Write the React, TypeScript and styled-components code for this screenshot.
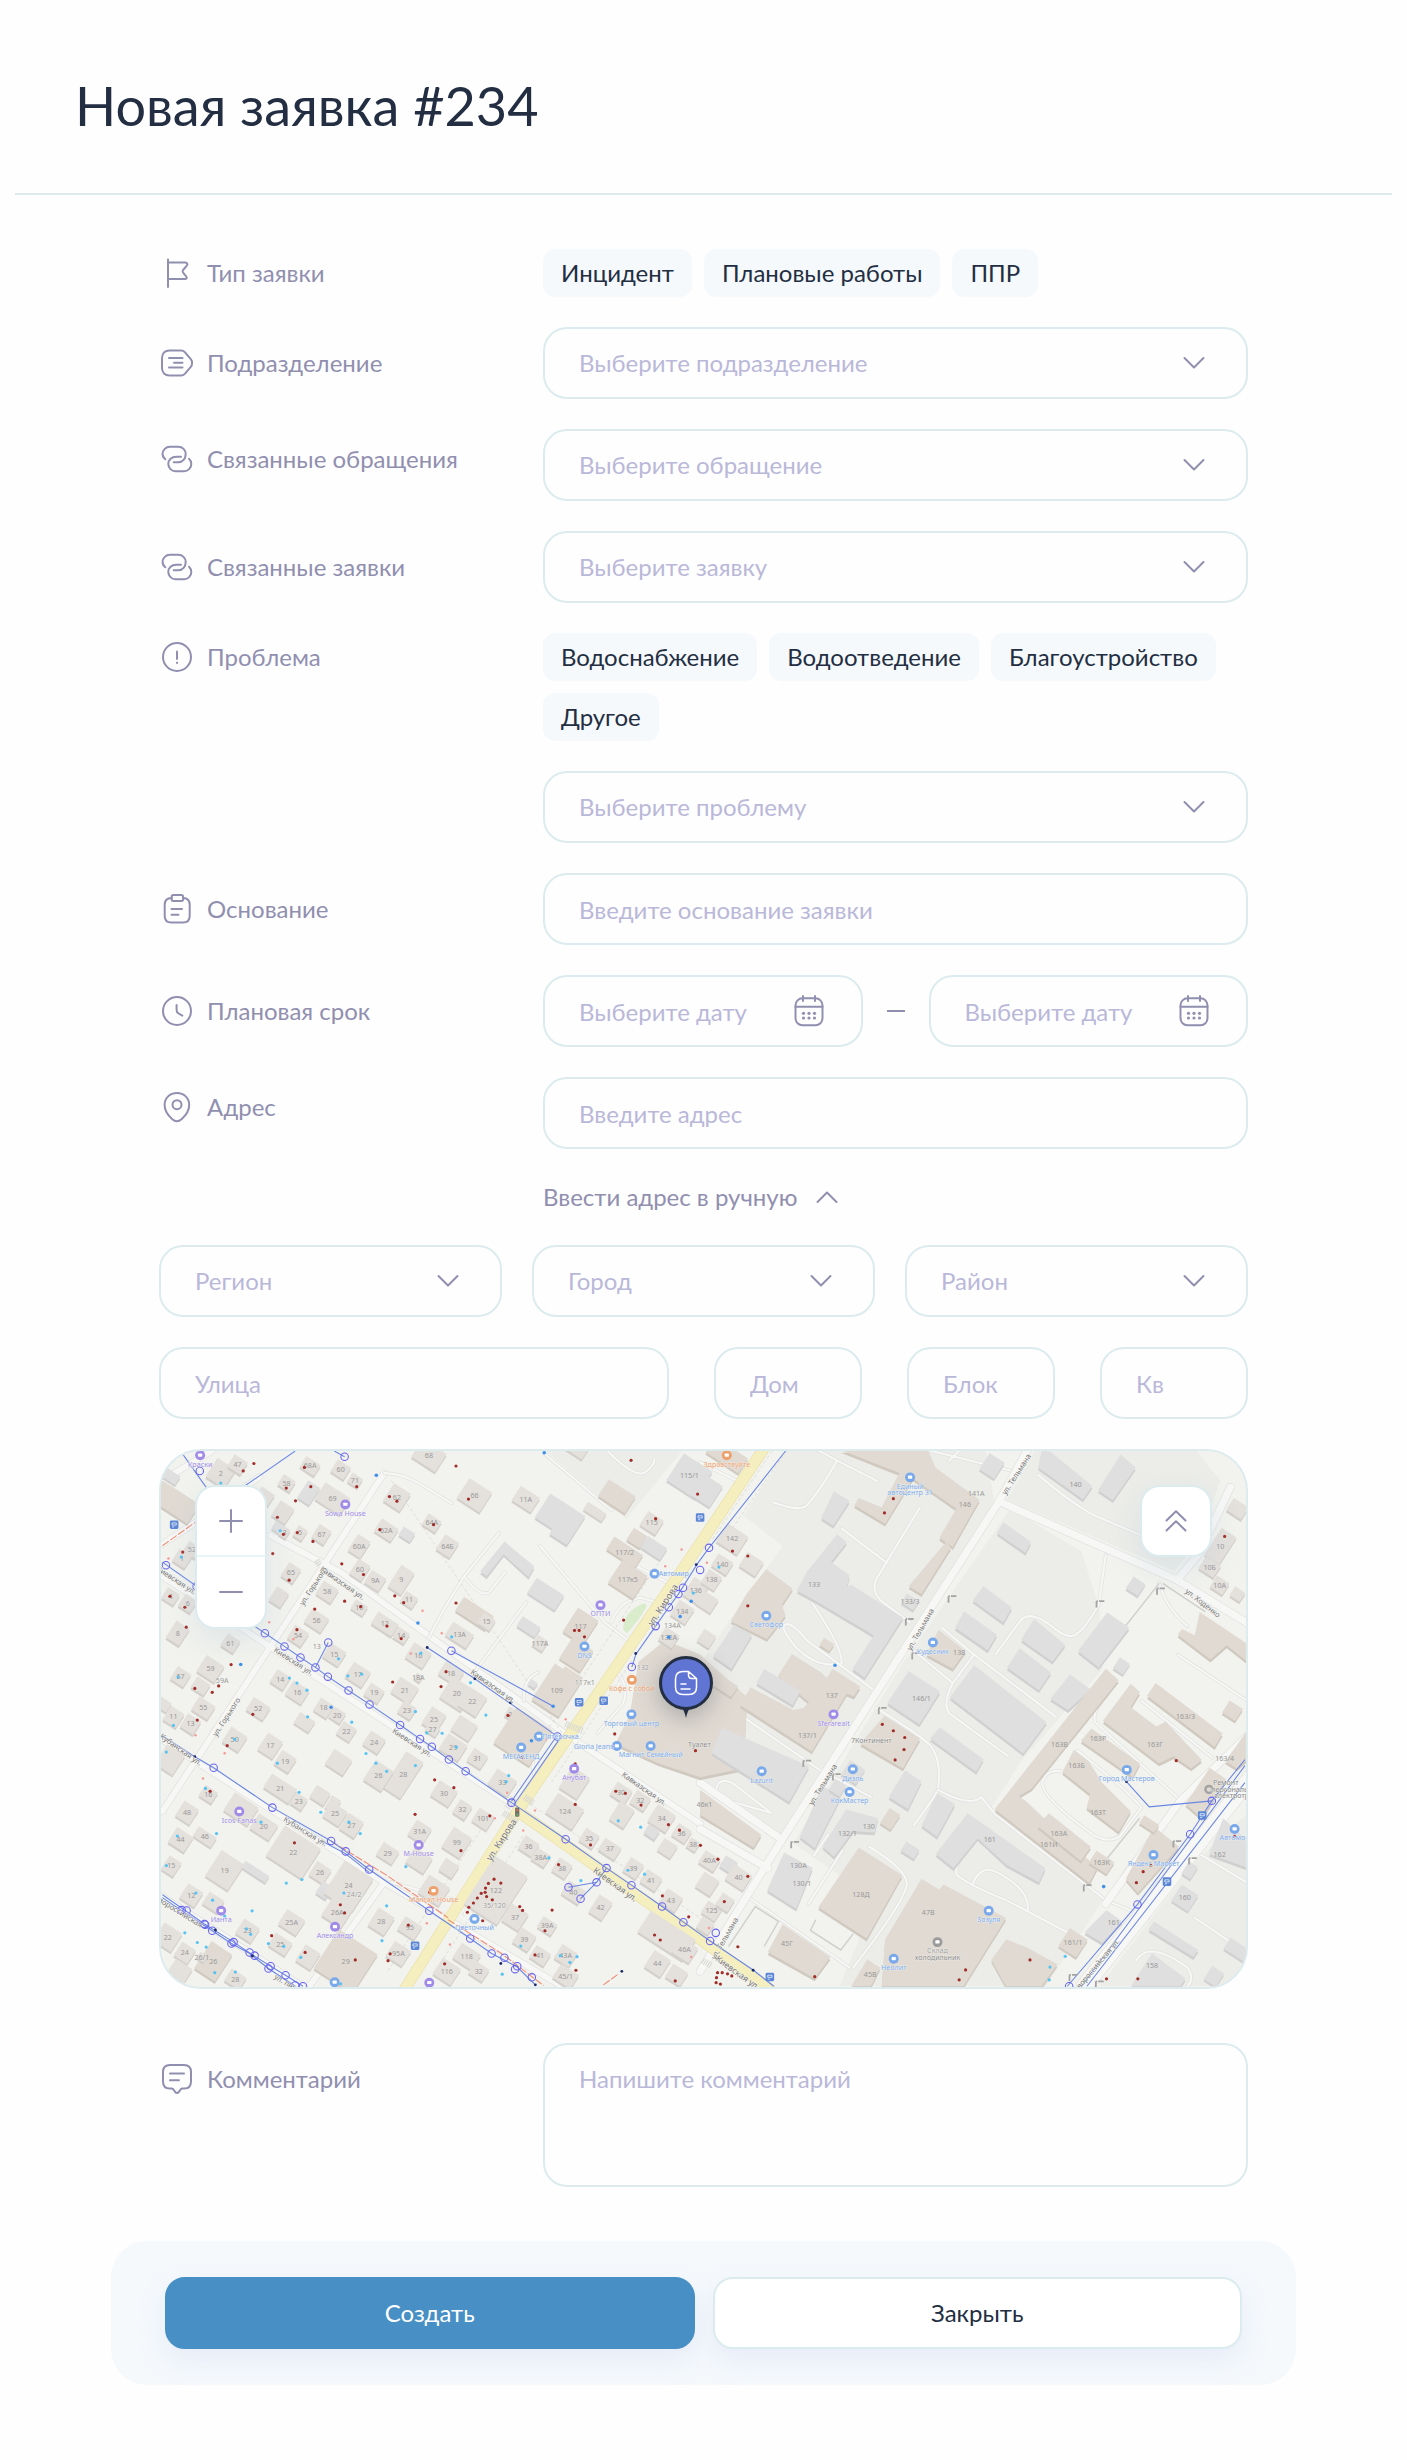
import React, { useId, useState } from "react";
import styled, { createGlobalStyle } from "styled-components";

const color = {
  page: "#fefefe",
  ink: "#232e42",
  muted: "#918fb0",
  placeholder: "#bab8d9",
  line: "#dcebee",
  soft: "#f5f9fc",
  primary: "#478fc5",
  pin: "#6074d4",
};

const GlobalStyle = createGlobalStyle`
  *, *::before, *::after { box-sizing: border-box; }
  body { margin: 0; background: ${color.page}; }
  body, button, input, select, textarea {
    font-family: Lato, Carlito, "Open Sans", sans-serif;
    font-size: 24px;
    line-height: 36px;
    color: ${color.ink};
  }
`;

/* ---------- page ---------- */

const Page = styled.main`
  padding: 0 15px 75px;
`;

const Header = styled.header`
  padding: 72px 60px 54px;
  border-bottom: 2px solid ${color.line};
`;

const Title = styled.h1`
  margin: 0;
  font-size: 54px;
  line-height: 67px;
  font-weight: 400;
`;

const Form = styled.form`
  display: flex;
  flex-direction: column;
  padding: 54px 96px 0;
`;

const Fields = styled.div`
  display: flex;
  flex-direction: column;
  gap: 30px;
  padding: 0 48px;
`;

const Row = styled.div<{ $spaced?: boolean }>`
  display: grid;
  grid-template-columns: 384px minmax(0, 1fr);
  align-items: start;
  margin-top: ${(p) => (p.$spaced ? 24 : 0)}px;
`;

const RowLabel = styled.label<{ $height: number }>`
  display: flex;
  align-items: center;
  gap: 12px;
  height: ${(p) => p.$height}px;
  color: ${color.muted};
`;

const RowBody = styled.div`
  grid-column: 2;
  display: flex;
  flex-direction: column;
  gap: 30px;
`;

const ChipList = styled.div`
  display: flex;
  flex-wrap: wrap;
  gap: 12px;
`;

const Chip = styled.button`
  height: 48px;
  padding: 0 18px;
  border: 0;
  border-radius: 12px;
  background: ${color.soft};
  cursor: pointer;
`;

const Control = styled.div`
  position: relative;
  min-width: 0;
`;

const ControlIcon = styled.span`
  position: absolute;
  top: 18px;
  right: 36px;
  height: 36px;
  color: ${color.muted};
  pointer-events: none;
`;

const boxed = `
  display: block;
  width: 100%;
  height: 72px;
  border: 2px solid ${color.line};
  border-radius: 24px;
  background: transparent;
  outline: none;
`;

const Input = styled.input<{ $icon?: boolean }>`
  ${boxed}
  padding: 0 ${(p) => (p.$icon ? 76 : 34)}px 0 34px;
  &::placeholder { color: ${color.placeholder}; opacity: 1; }
`;

const Select = styled.select`
  ${boxed}
  appearance: none;
  padding: 0 76px 0 34px;
  color: ${color.placeholder};
`;

const TextArea = styled.textarea`
  ${boxed}
  height: 144px;
  padding: 16px 34px;
  resize: none;
  &::placeholder { color: ${color.placeholder}; opacity: 1; }
`;

const DateRange = styled.div`
  display: grid;
  grid-template-columns: minmax(0, 1fr) 18px minmax(0, 1fr);
  gap: 24px;
  align-items: center;
`;

const Dash = styled.span`
  height: 2px;
  background: ${color.muted};
`;

const Toggle = styled.button`
  display: flex;
  align-items: center;
  align-self: flex-start;
  gap: 12px;
  height: 36px;
  padding: 0;
  border: 0;
  background: none;
  color: ${color.muted};
  cursor: pointer;
`;

const Thirds = styled.div`
  display: grid;
  grid-template-columns: repeat(3, minmax(0, 1fr));
  gap: 30px;
`;

const StreetLine = styled.div`
  display: grid;
  grid-template-columns: minmax(0, 1fr) repeat(3, 148px);
  gap: 45px;
`;

const Footer = styled.footer`
  display: grid;
  grid-template-columns: 1fr 1fr;
  gap: 18px;
  margin-top: 54px;
  padding: 36px 54px;
  border-radius: 36px;
  background: ${color.soft};
`;

const Action = styled.button<{ $primary?: boolean }>`
  height: 72px;
  border: 2px solid ${(p) => (p.$primary ? color.primary : color.line)};
  border-radius: 20px;
  background: ${(p) => (p.$primary ? color.primary : "#fff")};
  color: ${(p) => (p.$primary ? "#fff" : color.ink)};
  box-shadow: 0 12px 24px rgba(190, 200, 240, 0.25);
  cursor: pointer;
`;

/* ---------- map chrome ---------- */

const MapFrame = styled.section`
  position: relative;
  height: 540px;
  border: 2px solid ${color.line};
  border-radius: 42px;
  overflow: hidden;
  background: #f2f3ee;
`;

const MapDrawing = styled.svg`
  display: block;
  width: 100%;
  height: 100%;
  font-family: "Noto Sans", sans-serif;
`;

const MapPanel = styled.div<{ $side: "left" | "right" }>`
  position: absolute;
  top: 34px;
  ${(p) => p.$side}: 34px;
  display: flex;
  flex-direction: column;
  width: 72px;
  border: 2px solid ${color.line};
  border-radius: 20px;
  background: #fff;
  box-shadow: 0 12px 30px rgba(180, 200, 215, 0.3);
  overflow: hidden;
`;

const MapButton = styled.button`
  display: grid;
  place-items: center;
  height: 68px;
  padding: 0;
  border: 0;
  background: none;
  color: ${color.muted};
  cursor: pointer;
  & + & { height: 72px; border-top: 2px solid #e8f6fa; }
`;

const MapPin = styled.svg`
  position: absolute;
  left: 50%;
  top: 50%;
  width: 56px;
  height: 72px;
  margin: -63px 0 0 -46px;
  filter: drop-shadow(0 6px 12px rgba(35, 46, 66, 0.3));
`;

/* ---------- icons ---------- */

const Svg36 = ({ children }: { children: React.ReactNode }) => (
  <svg width="36" height="36" viewBox="0 0 36 36" fill="none" stroke="currentColor" strokeWidth="2" strokeLinecap="round" strokeLinejoin="round" aria-hidden="true">
    {children}
  </svg>
);

const icons = {
  flag: <path d="M9 4.500V32M9 7.500H26.300c2 0 2.700 1.700 1.500 3.200l-3.700 4.300c-.9 1-.9 1.700 0 2.700l3 3.700c1.200 1.600.7 2.600-1.300 2.600H9" />,
  unit: <path d="M10.500 5.500h11.600c1.500 0 2.800.6 3.700 1.600l6 7c1.700 2 1.700 5.800 0 7.800l-6 7c-.9 1-2.200 1.600-3.700 1.600H10.500c-4.600 0-7.500-3-7.500-7.500V13c0-4.500 2.900-7.500 7.500-7.500ZM10 13h13.500M15 17.800h8.500M10 22.500h13.500" />,
  link: <path d="M6.300 18.300C4.600 17 3.600 15.100 3.600 13a7.300 7.300 0 0 1 7.300-7.300h8.500a7.300 7.300 0 0 1 7.300 7.300c0 4.600-3 8.300-7.500 8.300h-4.500M22 15.700h-4.700c-4.700 0-8 3.300-8 7.300a7.300 7.300 0 0 0 7.300 7.300h8.400a7.300 7.300 0 0 0 7.300-7.300c0-2-.8-4-2.300-5.300" />,
  alert: <><circle cx="18" cy="18" r="14" /><path d="M18 12.500v7.500" /><circle cx="18" cy="23.700" r="1" fill="currentColor" stroke="none" /><path d="M18 23.700v.1" /></>,
  clipboard: <><path d="M12.500 7c-4.300 0-6.800 2.500-6.800 7v11c0 4.300 2.500 6.600 6.800 6.600h11.500c4.300 0 6.700-2.300 6.700-6.600V14c0-4.500-2.400-7-6.700-7" /><rect x="12.700" y="4" width="11.300" height="6" rx="1.500" /><path d="M12.500 18h10.500M12.500 23.700h7" /></>,
  clock: <><circle cx="18" cy="18" r="14" /><path d="M17.600 12v5c0 1.800.6 2.700 2 3.500l3.700 2.100" /></>,
  place: <><path d="M18 4C10.800 4 5.600 9 5.600 16c0 5.500 3.700 10.700 7.700 14.300 2.800 2.400 6.400 2.400 9.200 0C26.500 26.700 30.200 21.500 30.200 16c0-7-5.200-12-12.200-12Z" /><circle cx="18" cy="15.700" r="4.500" /></>,
  comment: <path d="M11 4h14c4.500 0 7 2.500 7 7v9.500c0 4.500-2.500 7-6.800 7h-1.700c-.8 0-1.400.4-1.900 1l-1.700 2.400c-1.100 1.500-2.700 1.500-3.800 0l-1.700-2.400c-.5-.6-1.100-1-1.900-1H10.800C6.500 27.500 4 25 4 20.500V11c0-4.500 2.500-7 7-7ZM11 12.500h14M11 19.300h9" />,
  down: <path d="M8.500 13l9.500 9.500 9.500-9.500" />,
  up: <path d="M8.500 23l9.500-9.500 9.500 9.500" />,
  calendar: <><rect x="4.500" y="5.300" width="27" height="27" rx="7" /><path d="M4.500 13.700h27M12 3v5M24 3v5" />{[20.300, 25].map((y) => [12.500, 18, 23.500].map((x) => <circle key={`${x}-${y}`} cx={x} cy={y} r="1.600" fill="currentColor" stroke="none" />))}</>,
  plus: <path d="M18 7v22M7 18h22" />,
  minus: <path d="M7 18h22" />,
  collapse: <path d="M8.500 17.500l9.500-9.300 9.500 9.300M8.500 27.500l9.500-9.300 9.500 9.300" />,
};

const Icon = ({ name }: { name: keyof typeof icons }) => <Svg36>{icons[name]}</Svg36>;

/* ---------- form parts ---------- */

const SelectBox = ({ id, text }: { id?: string; text: string }) => (
  <Control>
    <Select id={id} aria-label={id ? undefined : text} defaultValue="">
      <option value="">{text}</option>
    </Select>
    <ControlIcon><Icon name="down" /></ControlIcon>
  </Control>
);

const DateBox = ({ id, label }: { id?: string; label?: string }) => (
  <Control>
    <Input id={id} aria-label={label} $icon placeholder="Выберите дату" />
    <ControlIcon><Icon name="calendar" /></ControlIcon>
  </Control>
);

const Chips = ({ items, label, id }: { items: string[]; label: string; id: string }) => {
  const [active, setActive] = useState("");
  return (
    <ChipList role="group" aria-label={label} id={id}>
      {items.map((item) => (
        <Chip key={item} type="button" aria-pressed={active === item} onClick={() => setActive(item)}>{item}</Chip>
      ))}
    </ChipList>
  );
};

type FieldRowProps = {
  icon: keyof typeof icons;
  label: string;
  height?: number;
  spaced?: boolean;
  group?: boolean;
  children: (id: string) => React.ReactNode;
};

const FieldRow = ({ icon, label, height = 72, spaced, group, children }: FieldRowProps) => {
  const id = useId();
  return (
    <Row $spaced={spaced}>
      <RowLabel as={group ? "span" : "label"} htmlFor={group ? undefined : id} $height={height}>
        <Icon name={icon} />
        {label}
      </RowLabel>
      <RowBody>{children(id)}</RowBody>
    </Row>
  );
};

/* ---------- map data ----------
   Units are map units; the right half (everything east of Kirova) is kept
   in its own coordinates and shifted by EAST. */

const EAST = 1568;
type House = [number, number, number, number, string?, string?];

const tone: Record<string, [string, string]> = {
  r: ["#e4e0dc", "#d3cfcb"],
  g: ["#dfdfdf", "#d0d0d0"],
  b: ["#e0dad2", "#d0c9c0"],
};

const westHouses: House[] = [
  [221, 90, 62, 62, "2"], [268, 66, 44, 40, "47"], [90, 170, 130, 64, "", "b"], [75, 95, 60, 28, "", "g"],
  [472, 70, 48, 36, "68А"], [558, 80, 44, 40, "60"], [598, 110, 34, 30, "71"], [406, 118, 40, 34, "58"],
  [468, 145, 40, 58, "", "g"], [345, 155, 44, 36], [535, 162, 84, 56, "69"], [716, 158, 56, 58, "62"], [806, 40, 80, 60, "68"],
  [934, 152, 76, 66, "66"], [1078, 163, 64, 48, "11А"], [1152, 198, 64, 80, "", "g"], [1195, 236, 58, 96, "", "g"],
  [1272, 198, 62, 26], [1334, 155, 90, 56, "", "b"], [1538, 98, 96, 90, "115/1", "g"], [1220, 20, 60, 36],
  [395, 200, 46, 50], [382, 242, 30, 26, "", "g"], [400, 256, 24, 28, "3"], [444, 258, 30, 34, "5"], [504, 262, 40, 44, "67"],
  [610, 295, 42, 54, "60А"], [686, 250, 56, 42, "62А"], [744, 262, 38, 28, "", "g"], [814, 230, 44, 36, "64А"], [858, 295, 46, 50, "64Б"],
  [1432, 230, 52, 46, "115"], [1390, 272, 44, 40, "", "b"], [1438, 300, 66, 38, "", "g"], [1356, 312, 96, 42, "117/2", "b"],
  [1365, 388, 84, 76, "117к5", "b"], [612, 362, 40, 50, "60"], [655, 392, 48, 42, "9А"], [728, 390, 44, 72, "9"], [750, 446, 40, 34, "11"],
  [418, 370, 40, 46, "65"], [140, 305, 40, 34, "52"], [112, 330, 42, 40, "1"], [384, 438, 40, 46], [80, 436, 40, 36, "4"], [128, 456, 40, 40, "6"],
  [520, 424, 50, 44, "58"], [610, 468, 40, 30, "10"], [490, 504, 56, 46, "56"], [682, 514, 68, 40, "12"], [728, 546, 38, 34, "14"],
  [934, 484, 100, 46, "", "b"], [968, 508, 40, 34, "15"], [892, 545, 70, 44, "13А"], [1134, 430, 92, 50, "", "g"], [1086, 522, 60, 32, "", "g"],
  [1232, 520, 68, 80, "117", "b"], [1220, 600, 70, 70, "", "b"], [1200, 670, 60, 50, "", "b"], [1118, 568, 34, 34, "117А"],
  [100, 540, 44, 56, "8"], [248, 568, 42, 40, "61"], [438, 547, 46, 44, "54"], [540, 600, 52, 46, "15"], [108, 662, 44, 42, "57"], [192, 640, 60, 54, "59"],
  [164, 688, 44, 36, ""], [388, 670, 44, 42, "14"], [436, 706, 54, 46, "16"], [606, 656, 56, 50, "17"], [652, 708, 46, 40, "19"],
  [776, 602, 58, 50, "16"], [868, 652, 60, 44, "18"], [776, 664, 20, 20, "18А"], [738, 700, 62, 52, "21"], [884, 710, 72, 70, "20"], [928, 732, 60, 62, "22"],
  [1098, 682, 22, 18, "", "g"], [1165, 700, 90, 120, "109", "b"], [1040, 768, 36, 30, "24"], [1070, 830, 120, 120, "", "b"],
  [60, 740, 36, 30], [88, 775, 44, 46, "11"], [172, 750, 54, 44, "55"], [136, 795, 44, 44, "13"], [326, 752, 56, 42, "52"],
  [510, 750, 44, 42, "18"], [548, 770, 38, 34, "20"], [456, 790, 50, 36], [744, 756, 42, 38, "23"], [820, 782, 48, 56, "25"], [905, 806, 60, 50],
  [260, 838, 54, 50, "50"], [360, 856, 50, 56, "17"], [402, 900, 48, 46, "19"], [574, 816, 44, 42, "22"], [652, 846, 50, 46, "24"], [816, 810, 36, 28, "27"],
  [874, 860, 64, 52, "29"], [942, 892, 46, 42, "31"], [552, 902, 60, 50], [734, 938, 58, 120, "28"], [664, 940, 60, 66, "26"], [1012, 960, 66, 52, "33"],
  [78, 895, 60, 66], [388, 976, 84, 46, "21"], [186, 992, 42, 36, "16"], [440, 1012, 38, 36, "23"], [500, 995, 46, 40], [536, 1020, 30, 40], [848, 990, 60, 50, "30"],
  [126, 1044, 48, 50, "48"], [278, 1034, 80, 60], [342, 1084, 64, 50, "20"], [542, 1048, 54, 48, "25"], [588, 1080, 50, 52, "27"], [900, 1035, 40, 44, "32"], [958, 1062, 50, 44, "101"],
  [108, 1120, 54, 50, "44"], [176, 1112, 60, 32, "46"], [425, 1155, 120, 100, "22"], [780, 1098, 50, 50, "31А"], [884, 1128, 60, 66, "99"], [690, 1158, 52, 42, "29"], [778, 1178, 60, 50],
  [82, 1194, 40, 46, "15"], [232, 1206, 76, 86, "19"], [318, 1210, 80, 22, "", "g"], [500, 1212, 48, 46, "26"], [512, 1262, 34, 40, "", "g"], [580, 1250, 96, 110, "24"], [862, 1200, 44, 40],
  [138, 1276, 50, 48, "12"], [200, 1296, 50, 40], [548, 1324, 66, 62, "26А"], [672, 1350, 54, 58, "28"], [820, 1262, 70, 60], [994, 1262, 110, 160, "122"],
  [72, 1394, 60, 60, "22"], [296, 1376, 52, 48, "23"], [420, 1352, 60, 50, "25А"], [388, 1414, 56, 42, "25"], [752, 1368, 56, 44, "95"], [1048, 1338, 56, 56, "37"],
  [120, 1438, 46, 46, "24"], [200, 1462, 70, 90, "26", "b"], [168, 1450, 24, 20, "26/1"], [572, 1462, 130, 130, "29", "b"], [466, 1450, 50, 54], [720, 1440, 54, 50, "95А"], [856, 1490, 60, 54, "116"],
  [262, 1512, 50, 40, "28"], [105, 1490, 56, 50], [912, 1448, 64, 50, "118"], [946, 1490, 46, 40, "32"], [1074, 1400, 50, 50, "39"], [1138, 1362, 46, 36, "39А"], [1118, 1446, 48, 40, "41"],
  [1086, 1138, 46, 42, "36"], [1120, 1170, 44, 38, "38А"], [1180, 1200, 44, 44, "38"], [1188, 1040, 88, 66, "124"], [1215, 960, 60, 70], [1346, 988, 50, 42, "30"], [1400, 1010, 46, 42, "32"], [1348, 1050, 48, 60],
  [1460, 1060, 60, 56, "34"], [1432, 1098, 36, 30, "", "g"], [1516, 1102, 44, 40, "36"], [1256, 1116, 44, 42, "35"], [1314, 1146, 54, 40, "37"], [1476, 1144, 44, 40], [1548, 1134, 30, 30, "38"],
  [1212, 1268, 56, 44, "40"], [1288, 1310, 44, 58, "42"], [1380, 1200, 44, 46, "39"], [1430, 1234, 50, 42, "41"], [1486, 1290, 52, 46, "43"], [1474, 1390, 150, 70], [1524, 1430, 60, 50, "46А"],
  [1190, 1446, 50, 46, "43А"], [1190, 1504, 60, 46, "45/1"], [1448, 1468, 54, 56, "44"], [1502, 1500, 50, 44], [1518, 480, 50, 50, "134"], [1480, 552, 46, 42, "132А"], [1556, 420, 50, 60, "136"],
];

const westBlocks: [string, string][] = [
  ["b", "1395,620 1470,560 1568,600 1700,720 1690,920 1568,945 1450,905 1330,850 1370,770"],
  ["g", "1018,282 1102,352 1086,382 1016,318 968,380 950,366"],
];

const eastBlocks: [string, string][] = [
  ["b", "395,25 640,25 662,75 785,165 710,298 672,272 720,190 598,105 520,232 433,180 446,160 510,186 560,90"],
  ["b", "692,282 704,300 622,430 586,408"],
  ["g", "385,262 412,285 368,340 420,378 412,410 424,404 570,496 462,665 428,640 488,546 330,452 272,420 300,368"],
  ["b", "186,360 260,414 230,460 240,490 188,556 86,506 130,430"],
  ["g", "95,516 146,545 88,640 36,604"],
  ["b", "258,598 340,650 356,666 372,640 450,690 432,718 412,710 314,872 112,742 142,692 262,756 290,750 306,734 218,660"],
  ["g", "180,640 282,702 260,742 158,680"],
  ["g", "62,806 306,914 250,1014 32,876"],
  ["b", "0,980 172,1106 150,1142 0,1050"],
  ["g", "586,646 674,704 616,796 526,736"],
  ["g", "770,630 974,790 908,878 702,720"],
  ["b", "518,772 618,836 570,920 450,850"],
  ["b", "670,530 746,590 710,640 636,600"],
  ["g", "674,804 796,894 776,930 646,836"],
  ["g", "376,142 420,168 374,238 340,216"],
  ["g", "852,228 930,284 914,314 834,258"],
  ["g", "796,408 876,468 852,510 766,448"],
  ["g", "742,478 834,544 808,588 716,524"],
  ["g", "938,500 1026,572 990,620 902,558"],
  ["g", "898,582 986,650 952,700 862,636"],
  ["g", "1040,656 1098,698 1034,756 984,724"],
  ["g", "1144,482 1206,524 1120,636 1062,590"],
  ["g", "960,25 985,30 1102,126 1076,164 950,74"],
  ["g", "1182,38 1224,74 1160,166 1118,138"],
  ["b", "1404,480 1568,590 1540,622 1480,574 1434,614 1342,544 1354,528 1390,546"],
  ["b", "1140,640 1176,672 932,976 896,998 916,1012 1116,1200 1094,1242 828,1034"],
  ["b", "1210,682 1236,706 1210,748 1282,802 1308,788 1410,896 1380,920 1330,886 1290,906 1132,786"],
  ["b", "1280,680 1468,822 1446,860 1256,716"],
  ["b", "1100,808 1236,906 1216,944 1070,842"],
  ["b", "1050,868 1092,900 1130,960 1210,1040 1176,1098 1086,1030 1096,992 1018,930"],
  ["b", "980,1046 1098,1140 1070,1180 948,1082"],
  ["g", "752,1046 970,1200 952,1240 860,1190 780,1116 712,1200 662,1160"],
  ["g", "576,926 622,956 584,1034 530,1000"],
  ["g", "666,990 716,1020 666,1112 622,1080"],
  ["b", "446,1142 568,1220 468,1398 332,1310"],
  ["b", "622,1230 672,1260 684,1246 860,1340 740,1532 510,1532 520,1400"],
  ["g", "410,1035 500,1060 490,1100 430,1096 376,1168 344,1140"],
  ["g", "344,968 396,1000 322,1144 280,1112"],
  ["g", "236,1156 316,1200 270,1314 188,1262"],
  ["b", "232,1358 366,1450 322,1510 190,1436"],
  ["b", "860,1400 920,1424 1004,1470 960,1532 860,1532 818,1458"],
  ["b", "470,1456 506,1480 480,1532 424,1532"],
  ["g", "1270,1440 1364,1510 1350,1532 1210,1532"],
  ["g", "1470,1060 1568,1150 1568,1210 1430,1160"],
  ["b", "1432,918 1478,950 1410,1060 1364,1020"],
  ["b", "1276,1084 1346,1140 1230,1270 1196,1230"],
  ["b", "1568,770 1568,870 1508,920 1476,900"],
  ["g", "1142,1318 1186,1350 1130,1410 1080,1380"],
  ["g", "1276,1350 1400,1430 1386,1450 1260,1372"],
];

const eastHouses: House[] = [
  [90, 275, 70, 60, "142"], [62, 346, 50, 40, "140"], [32, 390, 44, 44, "138"], [144, 346, 54, 46], [20, 452, 48, 44], [18, 555, 40, 40],
  [72, 688, 60, 36, "", "b"], [356, 572, 34, 24, "", "b"], [590, 452, 40, 30, "133/3", "g"], [820, 70, 50, 54, "", "g"], [1224, 408, 40, 40, "", "g"],
  [1184, 632, 34, 36, "", "g"], [430, 930, 50, 48, "", "g"], [386, 974, 36, 36, "", "g"], [534, 1062, 36, 50, "", "b"], [590, 1150, 44, 30, "", "g"],
  [1462, 295, 50, 90, "10"], [1432, 354, 50, 40, "10Б"], [1460, 405, 42, 38, "10А"], [1510, 430, 34, 30], [1510, 190, 50, 40],
  [1496, 758, 44, 40, "", "b"], [1362, 1284, 56, 54, "160", "g"], [1376, 1206, 30, 40, "", "g"], [1048, 1410, 60, 60, "161/1", "b"], [1128, 1184, 60, 40, "163К", "b"],
  [1262, 1076, 50, 26, "", "b"], [1444, 1504, 40, 44, "", "g"], [1510, 1430, 70, 36, "", "g"], [26, 1180, 50, 40, "40А"], [80, 1190, 40, 36, "", "g"], [108, 1226, 60, 50, "40"], [20, 1244, 50, 50],
  [32, 1320, 46, 40, "125"], [70, 1296, 40, 40], [20, 140, 60, 70, "", "g"], [14, 1362, 40, 36], [75, 40, 110, 50, "", "b"],
];

const eastNumbers: [number, number, string][] = [
  [320, 402, "133"], [370, 714, "137"], [302, 828, "137/1"], [744, 178, "146"], [776, 146, "141А"], [622, 723, "146/1"], [728, 593, "138"],
  [1055, 122, "140"], [1364, 773, "163/3"], [1118, 835, "163Р"], [1010, 853, "163В"], [1278, 853, "163Г"], [1058, 912, "163Б"], [1118, 1043, "163Т"],
  [1474, 893, "163/4"], [1008, 1103, "163А"], [980, 1135, "161И"], [814, 1120, "161"], [474, 1083, "130"], [414, 1103, "132/1"], [276, 1192, "130А"],
  [286, 1242, "130/1"], [452, 1275, "128Д"], [641, 1324, "47В"], [244, 1413, "45Г"], [478, 1500, "45В"], [1460, 1163, "162"], [1270, 1475, "158"], [1162, 1354, "161"], [12, 1021, "46к1"],
];

const minorRoads = [
  "M200 25 57 110M57 290 160 222 330 100M57 380 370 585 1040 1020M500 365 57 1040M680 90 500 365M360 265 560 370 1200 830 1568 1075M57 840 680 1240 1180 1532M680 1240 470 1532M57 1280 450 1532",
];
const lanes = [
  "M680 90Q730 90 780 120L870 175M1130 35 1320 195M1310 30Q1380 100 1410 90 1440 70 1440 50M1003 258 905 380Q840 480 805 555M905 380Q950 440 975 425L1020 368M1080 452 930 655",
  "M1118 295 1300 510 1372 565M1350 330 1490 405M1318 510Q1340 450 1400 440L1470 460M1112 650Q1070 670 1072 730M990 1190 905 1330M990 1190 1060 1230M1340 655Q1370 700 1350 740L1280 820M1120 855Q1080 900 1110 955M880 1290 700 1240",
];
const eastRoads = [
  "M920 25 840 170 230 1120 0 1490M840 170 1340 390 1400 320 1490 130M1340 390 1568 530M230 1120 0 960M0 1090 190 1200M1568 800 1350 1010 1140 1300",
];
const eastLanes = [
  "M205 172Q280 200 300 180 330 150 385 55L498 112M385 55 330 25M398 246 525 342M618 186 495 388Q480 420 510 450L590 510M315 455Q400 580 398 625 330 640 270 580 220 520 240 515 260 510 300 560L495 705M30 712 330 920 480 1000M495 750Q640 840 650 860 680 900 668 980 660 1000 600 1080M590 580 710 680 770 600 1000 775M710 680Q680 740 700 765L865 885M680 525 770 600M1140 320 1120 460Q1080 530 1060 540 1040 560 1000 530 930 470 900 505L830 600",
  "M950 95Q1050 180 1110 210L1240 265M1290 400Q1310 470 1370 520M1342 600 1568 750M1240 730 1440 890M1145 712Q1100 760 1110 790L1350 1010M1060 870Q1200 980 1240 1030L1180 1110Q1150 1130 1110 1110 940 990 965 950 980 910 1060 940M668 980Q760 1030 790 1000L830 1050 1140 1290 1260 1340M755 1130Q710 1200 722 1220 760 1250 860 1290L1050 1390M765 1245Q790 1190 830 1210 930 1260 920 1320M475 1140Q590 1210 580 1250 570 1300 430 1480M400 1150 305 1300M360 1105 320 1165M140 1285 420 1480M45 1000Q40 940 90 960L200 1045M45 1000 200 1045M1255 1140Q1190 1200 1170 1260M1225 1460Q1260 1400 1370 1480 1390 1510 1370 1532M1370 1140 1568 1260M1390 1340 1568 1460M0 60 110 115M640 25 900 90M700 55 730 25",
];

const waterLines = [
  "M115 38 180 130M290 125 430 28M540 28 569 44M57 340 153 408 345 540 400 577 445 608 487 636 522 662 580 701 639 740 725 798 781 837 814 859 862 895 909 928 1038 1016 1190 1119 1305 1200 1375 1248 1461 1308 1521 1352 1596 1405 1718 1487 1775 1532",
  "M523 566 487 636M869 589 1155 745M801 580 935 668 1167 830M1167 826 1038 1012M1175 834 1046 1020M57 828 148 887 201 918 366 1030 531 1124 572 1153 638 1204 807 1320 922 1398 982 1440 1054 1478 1105 1528M505 1124 572 1160 638 1212",
  "M57 1275 122 1320 175 1357 257 1408 314 1446 361 1476 403 1501 452 1532M57 1283 111 1320 197 1376 251 1412 302 1440 355 1482 430 1532M1198 1254 1277 1240 1232 1286M1277 1240 1305 1200",
  "M1808 28 1593 300 1560 345 1507 430 1480 467 1443 520 1388 598 1376 635M2766 957 2830 1028 3006 1011",
  "M3099 895 3006 1011 2945 1105 2797 1302 2600 1532M3099 912 2640 1532M3099 960 2655 1532",
];
const valves = "569,44 162,84 67,349 153,408 345,540 400,577 445,608 487,636 523,566 522,662 580,701 639,740 725,798 781,837 814,859 862,895 909,928 1038,1016 869,589 1167,830 1190,1119 1305,1200 1375,1248 1461,1308 1521,1352 1277,1240 1198,1254 1232,1286 201,918 366,1030 531,1124 572,1153 638,1204 807,1320 922,1398 982,1440 1018,1452 1054,1476 1048,1484 1095,1507 111,1318 125,1319 175,1357 177,1359 197,1376 257,1408 251,1412 302,1437 316,1446 361,1476 355,1482 403,1501 430,1530 452,1532 1520,412 1507,430 1480,467 1443,520 1376,635 1593,300 1568,362 1596,1405 1612,1382 3006,1011 2945,1105 2797,1302 2605,1532";
const redDots = "284,84 314,63 456,74 405,132 474,128 431,168 603,128 566,171 695,156 716,169 882,70 917,163 1374,54 1443,218 1561,149 380,214 397,262 436,257 480,282 367,316 413,391 668,249 819,235 561,345 622,375 710,435 735,454 569,450 614,465 485,472 114,312 78,436 120,467 124,523 435,530 882,455 688,520 728,555 1353,503 1215,532 1228,532 1243,550 250,628 215,688 148,695 197,706 704,677 854,648 840,690 311,768 155,784 1028,771 1068,889 239,856 1328,823 1217,907 1555,870 822,952 876,974 191,984 1331,984 1358,990 1402,1023 1217,1021 767,1049 977,1053 1479,1078 1510,1093 1260,1135 896,1151 428,1129 1170,1190 989,1231 1008,1242 973,1243 965,1256 964,1268 968,1280 984,1289 953,1271 942,1284 931,1298 918,1310 914,1324 957,1348 1061,1308 1069,1319 1152,1318 1462,1278 1536,1337 808,1268 557,1303 569,1326 748,1360 364,1390 458,1437 599,1458 697,1441 691,1460 850,1469 1104,1444 1132,1376 1219,1487 1440,1388 1456,1402 1498,1517 1702,323 1659,309 1702,463 2111,162 2086,202 2080,796 2111,814 2143,833 2141,867 2116,896 3042,268 2906,898 3070,1111 2834,1192 2813,1210 2794,1241 1569,1136 1618,1175 1702,1223 1636,1294 1674,1421 1617,1494 1630,1494 1645,1497 1657,1503 1614,1508 1613,1522 1625,1526 1890,1505 2314,1486 2296,1514 2495,1458 2710,1511 2798,1511";
const cyanDots = "221,118 110,326 388,252 870,550 552,612 414,666 435,680 463,700 578,660 617,655 783,596 923,679 101,663 465,775 589,790 768,760 800,820 843,821 966,770 88,799 68,874 260,838 883,860 380,905 629,878 657,905 687,928 768,912 1030,940 1023,957 178,976 441,987 502,1043 334,1071 209,1103 99,1110 581,1071 613,1103 741,1196 449,1232 405,1242 567,1270 68,1193 151,1270 198,1290 232,1335 309,1320 293,1371 305,1386 120,1382 155,1409 180,1422 355,1412 398,1420 446,1451 204,1494 262,1492 687,1306 674,1404 1143,1171 1233,1235 1338,1067 1401,1085 1365,1206 1412,1217 1288,1221 1064,1419 1222,1449 1202,1465 1175,1446 558,1525 1012,1498 1549,427 1621,354 2594,1448 2551,1478 2549,1514 1496,668";
const blueDots = "658,96 1130,33 775,511 277,628 1155,745 531,748 1094,842 1543,450 1512,493 1480,551 1947,630 2702,1252";
const pinkDots = "74,330 357,509 425,557 788,477 842,540 755,597 1190,782 1136,837 150,827 171,948 232,877 1026,988 991,1060 1104,1038 1071,1094 800,1355 865,1415 1470,352 1516,305 1587,342 1593,1368 1543,1450";
const blackDots = "148,887 505,1124 935,668 801,580 1035,735 206,1374 310,1447 1105,1528 1387,597 1557,347 1348,1490 1008,1468 2766,957 1717,1487";

const points = (list: string) => list.split(" ").map((p) => p.split(",").map(Number));

const places: [number, number, string, string][] = [
  [163, 40, "Краски", "#a08ce8"], [571, 178, "Sowa House", "#a08ce8"], [1288, 461, "ОПТИ", "#a08ce8"], [1243, 577, "DNS", "#79a9ea"],
  [1376, 671, "Кофе с собой", "#eda06c"], [1375, 768, "Торговый центр", "#79a9ea"], [1065, 861, "МЕГАХЕНД", "#79a9ea"], [1429, 857, "Магнит Семейный", "#79a9ea"],
  [1214, 921, "Анубат", "#a08ce8"], [273, 1041, "Icos Fanas", "#a08ce8"], [777, 1135, "M-House", "#a08ce8"], [819, 1264, "Мангал House", "#eda06c"],
  [222, 1320, "Ианта", "#a08ce8"], [542, 1365, "Александр", "#a08ce8"], [934, 1343, "Цветочный", "#79a9ea"], [541, 1521, "", "#79a9ea"], [807, 1522, "", "#a08ce8"],
  [1643, 40, "Здравствуйте", "#eda06c"], [2158, 102, "Единый", "#79a9ea"], [1754, 491, "Светофор", "#79a9ea"], [2222, 566, "Кудесник", "#79a9ea"], [1943, 768, "Sferarealt", "#a08ce8"],
  [1741, 928, "Lazurit", "#79a9ea"], [1997, 922, "Диэль", "#79a9ea"], [1988, 986, "КокМастер", "#79a9ea"], [2379, 1320, "Зозуля", "#79a9ea"], [2112, 1455, "Неолит", "#79a9ea"],
  [2767, 924, "Город Мастеров", "#79a9ea"], [2842, 1163, "Яндекс Маркет", "#79a9ea"], [3070, 1090, "Автомой", "#79a9ea"], [2235, 1408, "Склад", "#9b9b9b"],
];

const placeNotes: [number, number, string, string][] = [
  [1494, 380, "Автомир", "#79a9ea"], [1175, 838, "Пятёрочка", "#79a9ea"], [1269, 865, "Gloria Jeans", "#79a9ea"], [2158, 152, "автоцентр 31", "#79a9ea"],
  [2049, 849, "7Континент", "#888"], [2235, 1457, "холодильник", "#888"], [3045, 966, "Ремонт", "#888"], [3062, 985, "персональн", "#888"], [3062, 1003, "электротр", "#888"],
  [1566, 860, "Туалет", "#888"], [225, 680, "59А", "#999"], [1244, 686, "117к1", "#999"], [1490, 526, "134А", "#999"], [1407, 644, "132", "#999"], [491, 584, "13", "#999"], [596, 1280, "24/2", "#999"], [990, 1313, "35/120", "#999"],
];

const streets: [number, number, number, string, number?][] = [
  [95, 392, 33, "Киевская ул."], [425, 620, 33, "Киевская ул."], [758, 848, 33, "Киевская ул."], [1328, 1248, 36, "Киевская ул.", 24], [1672, 1496, 36, "Киевская ул.", 24],
  [562, 400, 35, "Кавказская ул."], [985, 690, 35, "Кавказская ул."], [1410, 978, 35, "Кавказская ул."], [108, 868, 35, "Кубанская ул."], [458, 1098, 32, "Кубанская ул."],
  [482, 408, -57, "ул. Горького"], [238, 776, -57, "ул. Горького"], [1466, 462, -57, "ул. Кирова", 26], [1012, 1122, -57, "ул. Кирова", 26],
  [2458, 94, -57, "ул. Тельмана"], [2188, 530, -60, "ул. Тельмана"], [1914, 966, -58, "ул. Тельмана"], [1638, 1398, -60, "ул. Тельмана"],
  [2980, 456, 38, "ул. Ходенко"], [2678, 1480, -50, "Новороссийская ул."], [95, 1318, 32, "Новороссийская"], [405, 1524, 32, "ул. пер."],
];

const stops = [[90, 235], [1228, 734], [1297, 730], [767, 1418], [1568, 215], [2979, 1052], [2880, 1238], [1764, 1506]];
const gates = [[2270, 436], [2150, 500], [2168, 596], [2074, 750], [1862, 898], [1945, 936], [1828, 1126], [2686, 450], [2856, 414], [2650, 1248], [2902, 1124], [2946, 1172], [2610, 1500], [2684, 1518]];

const HouseShape = ({ house: [x, y, w, h, label, kind = "r"] }: { house: House }) => (
  <g>
    <g transform={`rotate(33 ${x} ${y})`}>
      <rect x={x - w / 2 + 3} y={y - h / 2 + 6} width={w} height={h} fill={tone[kind][1]} />
      <rect x={x - w / 2} y={y - h / 2} width={w} height={h} fill={tone[kind][0]} />
    </g>
    {label ? <text x={x} y={y + 7}>{label}</text> : null}
  </g>
);

const Block = ({ kind, shape }: { kind: string; shape: string }) => (
  <g>
    <polygon points={shape} fill={tone[kind][1]} transform="translate(0 8)" />
    <polygon points={shape} fill={tone[kind][0]} />
  </g>
);

const Road = ({ d, width }: { d: string; width: number }) => (
  <g fill="none" strokeLinecap="round" strokeLinejoin="round">
    <path d={d} stroke="#e1e1e0" strokeWidth={width + 4} />
    <path d={d} stroke="#f7f7f6" strokeWidth={width} />
  </g>
);

const Dots = ({ list, fill, r }: { list: string; fill: string; r: number }) => (
  <g fill={fill}>{points(list).map(([x, y], i) => <circle key={i} cx={x} cy={y} r={r} />)}</g>
);

const CityMap = () => (
  <MapDrawing viewBox="53 25 3049 1512" preserveAspectRatio="xMidYMid slice" role="img" aria-label="Карта">
    <rect x="0" y="0" width="3200" height="1600" fill="#f2f3ee" />
    <path d="M1130 25 1360 220 1520 25ZM1812 25 1690 210 1800 295 1640 520 1560 640 1568 960 1810 1120 2400 200 2370 25Z" fill="#ecede9" />
    <path d="M2440 190 2640 310 2690 470 2700 640 2470 900 2380 1040 2700 1290 2540 1532H1960L2060 1290 1830 1130 2140 620ZM2510 25H2960L3030 110 2970 280 2900 365 2430 165Z" fill="#ecede9" />
    <path d="M2960 1180 3102 1050V1532H2690Z" fill="#ecede9" />
    <path d="M1352 530Q1350 490 1390 465 1425 445 1415 470 1400 500 1362 540Z" fill="#d9eccb" />

    {minorRoads.map((d) => <Road key={d} d={d} width={16} />)}
    {lanes.map((d) => <Road key={d} d={d} width={6} />)}
    <g transform={`translate(${EAST} 0)`}>
      {eastLanes.map((d) => <Road key={d} d={d} width={6} />)}
      {eastRoads.map((d) => <Road key={d} d={d} width={20} />)}
      <Road d="M1568 920 1080 1532" width={44} />
      <path d="M1290 400 1140 590M1235 1060 1130 1190M1300 400 1420 480M80 1420 155 1308 220 1350 180 1420M325 1345 310 1375 395 1430 430 1385" fill="none" stroke="#cfcfcd" strokeWidth="4" />
    </g>
    <g fill="none" stroke="#d5d5d2" strokeWidth="2" strokeDasharray="9 7">
      <path d="M1460 330 1080 900M1500 430 1150 960M960 1080 690 1490M1070 1110 830 1480M700 110 1200 850M1090 1020 1568 1340M1810 28 1620 300M1770 28 1600 280" />
    </g>
    <path d="M735 1545 1055 1040 1560 300 1748 20M1055 1040 1568 1400 1770 1545" fill="none" stroke="#ebe3b4" strokeWidth="33" />
    <path d="M735 1545 1055 1040 1560 300 1748 20M1055 1040 1568 1400 1770 1545" fill="none" stroke="#f5eebf" strokeWidth="28" />
    <path d="M1015 1045 1055 1070M1075 1000 1100 1018M1190 795 1240 815M1025 1030 1045 1000M490 335 500 350M1575 1460 1600 1475" stroke="#d8d8d5" strokeWidth="18" strokeDasharray="3 3" />

    <g fontSize="20" fill="#999" textAnchor="middle">
      {westBlocks.map(([kind, shape]) => <Block key={shape} kind={kind} shape={shape} />)}
      {westHouses.map((house, i) => <HouseShape key={i} house={house} />)}
      <g transform={`translate(${EAST} 0)`}>
        {eastBlocks.map(([kind, shape]) => <Block key={shape} kind={kind} shape={shape} />)}
        {eastHouses.map((house, i) => <HouseShape key={i} house={house} />)}
        {eastNumbers.map(([x, y, n], i) => <text key={i} x={x} y={y + 7}>{n}</text>)}
      </g>
    </g>

    <g fill="none" stroke="#f08a70" strokeWidth="3" strokeDasharray="22 5">
      <path d="M57 294 155 224M531 1124 690 1222 860 1340M860 1345 1010 1440 1128 1530M1296 1528 1338 1498" />
    </g>
    <g fill="none" stroke="#6a86e3" strokeWidth="3">
      {waterLines.map((d) => <path key={d} d={d} />)}
    </g>
    <g fill="none" stroke="#6763ee" strokeWidth="3">
      {points(valves).map(([x, y], i) => <circle key={i} cx={x} cy={y} r="10.500" />)}
    </g>
    <Dots list={redDots} fill="#a22c28" r={4.500} />
    <Dots list={cyanDots} fill="#55c3f3" r={4.500} />
    <Dots list={blueDots} fill="#3f90ea" r={5} />
    <Dots list={pinkDots} fill="#f39a94" r={3.500} />
    <Dots list={blackDots} fill="#1c2a6b" r={4} />

    {gates.map(([x, y]) => <path key={`${x}-${y}`} d={`M${x - 4} ${y + 18}V${y}H${x + 18}`} fill="none" stroke="#a3a3a3" strokeWidth="5" strokeDasharray="18 0 4 3" />)}
    {stops.map(([x, y]) => (
      <g key={`${x}-${y}`}>
        <rect x={x - 12} y={y - 12} width="24" height="24" rx="4" fill="#5c86d6" />
        <path d={`M${x - 6} ${y - 5}h12v6h-12zM${x - 6} ${y + 6}h6`} fill="none" stroke="#fff" strokeWidth="2" />
      </g>
    ))}
    <rect x="1048" y="1030" width="12" height="26" rx="3" fill="#74706a" />
    <circle cx="1054" cy="1037" r="3" fill="#e06a5a" />
    <circle cx="1054" cy="1050" r="3" fill="#62b56c" />

    <g fontSize="20" textAnchor="middle" stroke="#f5f5f2" strokeWidth="2" paintOrder="stroke">
      {places.map(([x, y, name, fill]) => (
        <g key={`${x}-${y}`}>
          <circle cx={x} cy={y} r="14" fill={fill} stroke="none" />
          <rect x={x - 6} y={y - 5} width="12" height="9" rx="2" fill="#fff" stroke="none" />
          <text x={x} y={y + 32} fill={fill}>{name}</text>
        </g>
      ))}
      {[[1440, 373], [1115, 830], [1334, 857]].map(([x, y]) => (
        <g key={x} stroke="none">
          <circle cx={x} cy={y} r="14" fill="#79a9ea" />
          <rect x={x - 6} y={y - 5} width="12" height="9" rx="2" fill="#fff" />
        </g>
      ))}
      <circle cx="2998" cy="979" r="10" fill="none" stroke="#a3a3a3" strokeWidth="7" />
      {placeNotes.map(([x, y, name, fill]) => <text key={`${x}-${y}`} x={x} y={y} fill={fill}>{name}</text>)}
      {streets.map(([x, y, angle, name, size = 21]) => (
        <text key={`${x}-${y}`} x={x} y={y + 6} fontSize={size} fill="#777" transform={`rotate(${angle} ${x} ${y})`}>{name}</text>
      ))}
    </g>
  </MapDrawing>
);

const Pin = () => (
  <MapPin viewBox="0 0 56 72" fill="none" aria-hidden="true">
    <path d="M22 50h12c-3.500 3-5 7-6 12-1-5-2.500-9-6-12Z" fill={color.ink} />
    <circle cx="28" cy="27" r="25.500" fill={color.pin} stroke={color.ink} strokeWidth="3" />
    <g stroke="#fff" strokeWidth="1.500" strokeLinecap="round" strokeLinejoin="round">
      <path d="M30.500 15.500H25c-5 0-7.500 2.500-7.500 7.500v8c0 5 2.500 7.500 7.500 7.500h6c5 0 7.500-2.500 7.500-7.500v-8.500M30.500 15.500l8 7H34c-2.500 0-3.500-1-3.500-3.500Z" />
      <path d="M23 28h5M23 33h9" />
    </g>
  </MapPin>
);

/* ---------- screen ---------- */

export default function App() {
  const [manual, setManual] = useState(true);
  return (
    <>
      <GlobalStyle />
      <Page>
        <Header>
          <Title>Новая заявка #234</Title>
        </Header>
        <Form onSubmit={(e) => e.preventDefault()}>
          <Fields>
            <FieldRow icon="flag" label="Тип заявки" height={48} group>
              {(id) => <Chips id={id} label="Тип заявки" items={["Инцидент", "Плановые работы", "ППР"]} />}
            </FieldRow>
            <FieldRow icon="unit" label="Подразделение">
              {(id) => <SelectBox id={id} text="Выберите подразделение" />}
            </FieldRow>
            <FieldRow icon="link" label="Связанные обращения" height={60}>
              {(id) => <SelectBox id={id} text="Выберите обращение" />}
            </FieldRow>
            <FieldRow icon="link" label="Связанные заявки">
              {(id) => <SelectBox id={id} text="Выберите заявку" />}
            </FieldRow>
            <FieldRow icon="alert" label="Проблема" height={48} group>
              {(id) => (
                <>
                  <Chips id={id} label="Проблема" items={["Водоснабжение", "Водоотведение", "Благоустройство", "Другое"]} />
                  <SelectBox text="Выберите проблему" />
                </>
              )}
            </FieldRow>
            <FieldRow icon="clipboard" label="Основание">
              {(id) => <Input id={id} placeholder="Введите основание заявки" />}
            </FieldRow>
            <FieldRow icon="clock" label="Плановая срок">
              {(id) => (
                <DateRange>
                  <DateBox id={id} />
                  <Dash />
                  <DateBox label="Дата окончания" />
                </DateRange>
              )}
            </FieldRow>
            <FieldRow icon="place" label="Адрес" height={60}>
              {(id) => (
                <>
                  <Input id={id} placeholder="Введите адрес" />
                  <Toggle type="button" aria-expanded={manual} onClick={() => setManual(!manual)}>
                    Ввести адрес в ручную
                    <Icon name={manual ? "up" : "down"} />
                  </Toggle>
                </>
              )}
            </FieldRow>
            {manual && (
              <>
                <Thirds>
                  <SelectBox text="Регион" />
                  <SelectBox text="Город" />
                  <SelectBox text="Район" />
                </Thirds>
                <StreetLine>
                  {["Улица", "Дом", "Блок", "Кв"].map((name) => <Input key={name} aria-label={name} placeholder={name} />)}
                </StreetLine>
              </>
            )}
            <MapFrame aria-label="Карта">
              <CityMap />
              <Pin />
              <MapPanel $side="left">
                <MapButton type="button" aria-label="Приблизить"><Icon name="plus" /></MapButton>
                <MapButton type="button" aria-label="Отдалить"><Icon name="minus" /></MapButton>
              </MapPanel>
              <MapPanel $side="right">
                <MapButton type="button" aria-label="Свернуть карту"><Icon name="collapse" /></MapButton>
              </MapPanel>
            </MapFrame>
            <FieldRow icon="comment" label="Комментарий" spaced>
              {(id) => <TextArea id={id} placeholder="Напишите комментарий" />}
            </FieldRow>
          </Fields>
          <Footer>
            <Action type="submit" $primary>Создать</Action>
            <Action type="button">Закрыть</Action>
          </Footer>
        </Form>
      </Page>
    </>
  );
}
